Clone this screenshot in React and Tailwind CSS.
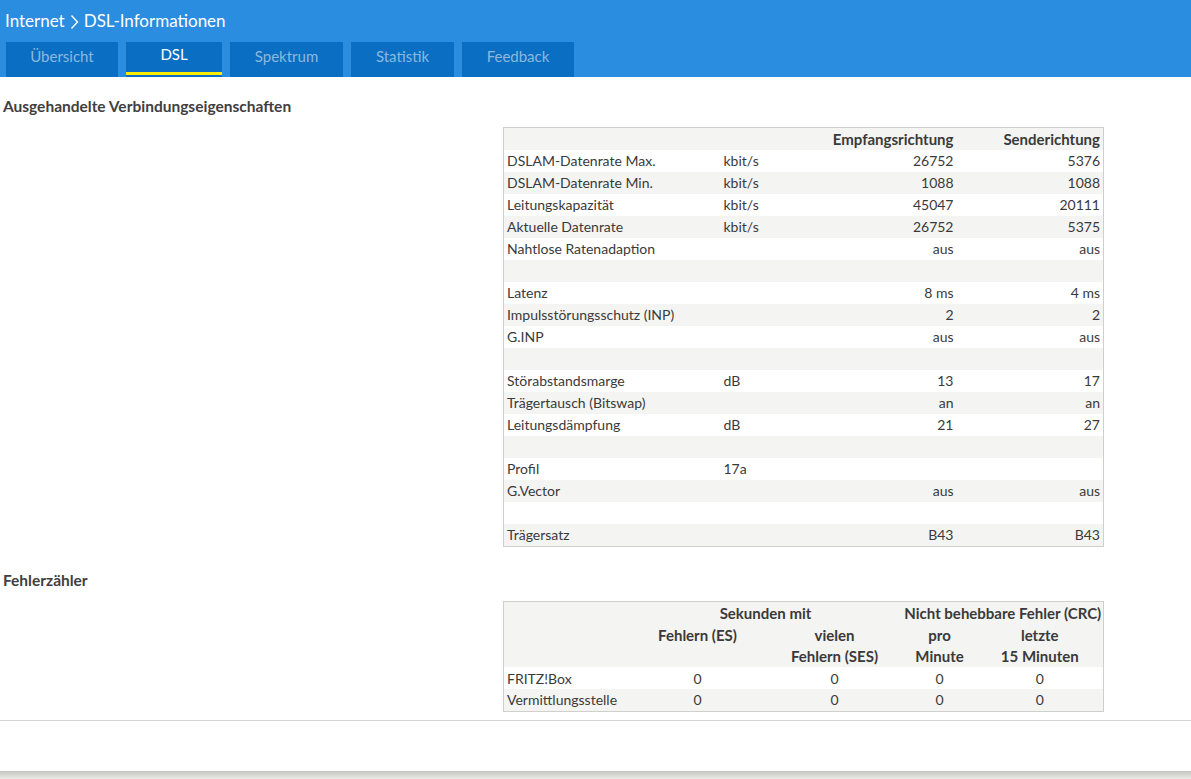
import React from "react";

const TABS = ["Übersicht", "DSL", "Spektrum", "Statistik", "Feedback"];
const TAB_W = ["w-[112px]", "w-[96px]", "w-[113px]", "w-[103px]", "w-[112px]"];

const ROWS = [
  ["DSLAM-Datenrate Max.", "kbit/s", "26752", "5376"],
  ["DSLAM-Datenrate Min.", "kbit/s", "1088", "1088"],
  ["Leitungskapazität", "kbit/s", "45047", "20111"],
  ["Aktuelle Datenrate", "kbit/s", "26752", "5375"],
  ["Nahtlose Ratenadaption", "", "aus", "aus"],
  null,
  ["Latenz", "", "8 ms", "4 ms"],
  ["Impulsstörungsschutz (INP)", "", "2", "2"],
  ["G.INP", "", "aus", "aus"],
  null,
  ["Störabstandsmarge", "dB", "13", "17"],
  ["Trägertausch (Bitswap)", "", "an", "an"],
  ["Leitungsdämpfung", "dB", "21", "27"],
  null,
  ["Profil", "17a", "", ""],
  ["G.Vector", "", "aus", "aus"],
  null,
  ["Trägersatz", "", "B43", "B43"],
];

function Chevron() {
  return (
    <svg width="9" height="16" viewBox="0 0 9 16" className="mx-[5px] mt-[2px]">
      <path d="M1.5 1.5 L7.5 8 L1.5 14.5" fill="none" stroke="white" strokeWidth="1.4" />
    </svg>
  );
}

export default function App() {
  return (
    <div
      className="relative h-[779px] bg-white text-[#3a3a3a] text-[14px]"
      style={{ fontFamily: '"Source Sans Pro", Lato, "Liberation Sans", sans-serif' }}
    >
      <header className="bg-[#2a8de0] h-[77px] flex flex-col">
        <div className="flex items-center h-[40px] pl-[5px] pt-[1px] text-white text-[17px]">
          <span>Internet</span>
          <Chevron />
          <span>DSL-Informationen</span>
        </div>
        <nav className="flex gap-[8px] pl-[6px] mt-[2px]">
          {TABS.map((t, i) => (
            <div
              key={t}
              className={`${TAB_W[i]} h-[35px] bg-[#0a6fc2] flex flex-col items-center text-[15px] ${
                i === 1 ? "text-white" : "text-[#8ab8e0]"
              }`}
            >
              <span className="flex-1 flex items-center pb-[6px]">{t}</span>
              {i === 1 ? <div className="w-full h-[3px] bg-[#ffed00] mb-[2px]" /> : null}
            </div>
          ))}
        </nav>
      </header>

      <h2 className="font-bold text-[15.5px] pl-[3px] mt-[20px] leading-[19px] text-[#404040]">
        Ausgehandelte Verbindungseigenschaften
      </h2>

      <div className="pl-[503px] mt-[11px]">
        <table className="table-fixed border-collapse border border-[#cfcfcb] w-[600px] leading-[22px]">
          <colgroup>
            <col className="w-[217px]" />
            <col className="w-[110px]" />
            <col className="w-[126px]" />
            <col className="w-[147px]" />
          </colgroup>
          <tbody>
            <tr className="bg-[#f4f4f2] font-bold text-[15px] h-[22px]">
              <td />
              <td />
              <td className="text-right pr-[3px]">Empfangsrichtung</td>
              <td className="text-right pr-[3px]">Senderichtung</td>
            </tr>
            {ROWS.map((r, i) => (
              <tr key={i} className={i % 2 === 0 ? "bg-white h-[22px]" : "bg-[#f4f4f2] h-[22px]"}>
                {r ? (
                  <>
                    <td className="pl-[3px]">{r[0]}</td>
                    <td className="pl-[3px]">{r[1]}</td>
                    <td className="text-right pr-[3px]">{r[2]}</td>
                    <td className="text-right pr-[3px]">{r[3]}</td>
                  </>
                ) : (
                  <td colSpan={4} />
                )}
              </tr>
            ))}
          </tbody>
        </table>
      </div>

      <h2 className="font-bold text-[15.5px] pl-[3px] mt-[24px] leading-[19px] text-[#404040]">
        Fehlerzähler
      </h2>

      <div className="pl-[503px] mt-[11px]">
        <table className="table-fixed border-collapse border border-[#cfcfcb] w-[600px] leading-[21px]">
          <colgroup>
            <col className="w-[125px]" />
            <col className="w-[138px]" />
            <col className="w-[136px]" />
            <col className="w-[74px]" />
            <col className="w-[127px]" />
          </colgroup>
          <tbody className="text-center">
            <tr className="bg-[#f4f4f2] font-bold text-[15px]">
              <td />
              <td colSpan={2} className="pt-[1px]">Sekunden mit</td>
              <td colSpan={2} className="pt-[1px]">Nicht behebbare Fehler (CRC)</td>
            </tr>
            <tr className="bg-[#f4f4f2] font-bold text-[15px] align-top">
              <td />
              <td className="pt-[1px]">Fehlern (ES)</td>
              <td className="pt-[1px]">
                vielen
                <br />
                Fehlern (SES)
              </td>
              <td className="pt-[1px]">
                pro
                <br />
                Minute
              </td>
              <td className="pt-[1px]">
                letzte
                <br />
                15 Minuten
              </td>
            </tr>
            <tr className="bg-white h-[22px]">
              <td className="text-left pl-[3px]">FRITZ!Box</td>
              <td>0</td>
              <td>0</td>
              <td>0</td>
              <td>0</td>
            </tr>
            <tr className="bg-[#f4f4f2] h-[22px]">
              <td className="text-left pl-[3px]">Vermittlungsstelle</td>
              <td>0</td>
              <td>0</td>
              <td>0</td>
              <td>0</td>
            </tr>
          </tbody>
        </table>
      </div>

      <div className="mt-[8px] border-t border-[#d4d4d4]" />

      <div className="absolute left-0 right-0 bottom-0 h-[8px] bg-gradient-to-b from-[#c4c4c0] to-[#ebebe7]" />
    </div>
  );
}
